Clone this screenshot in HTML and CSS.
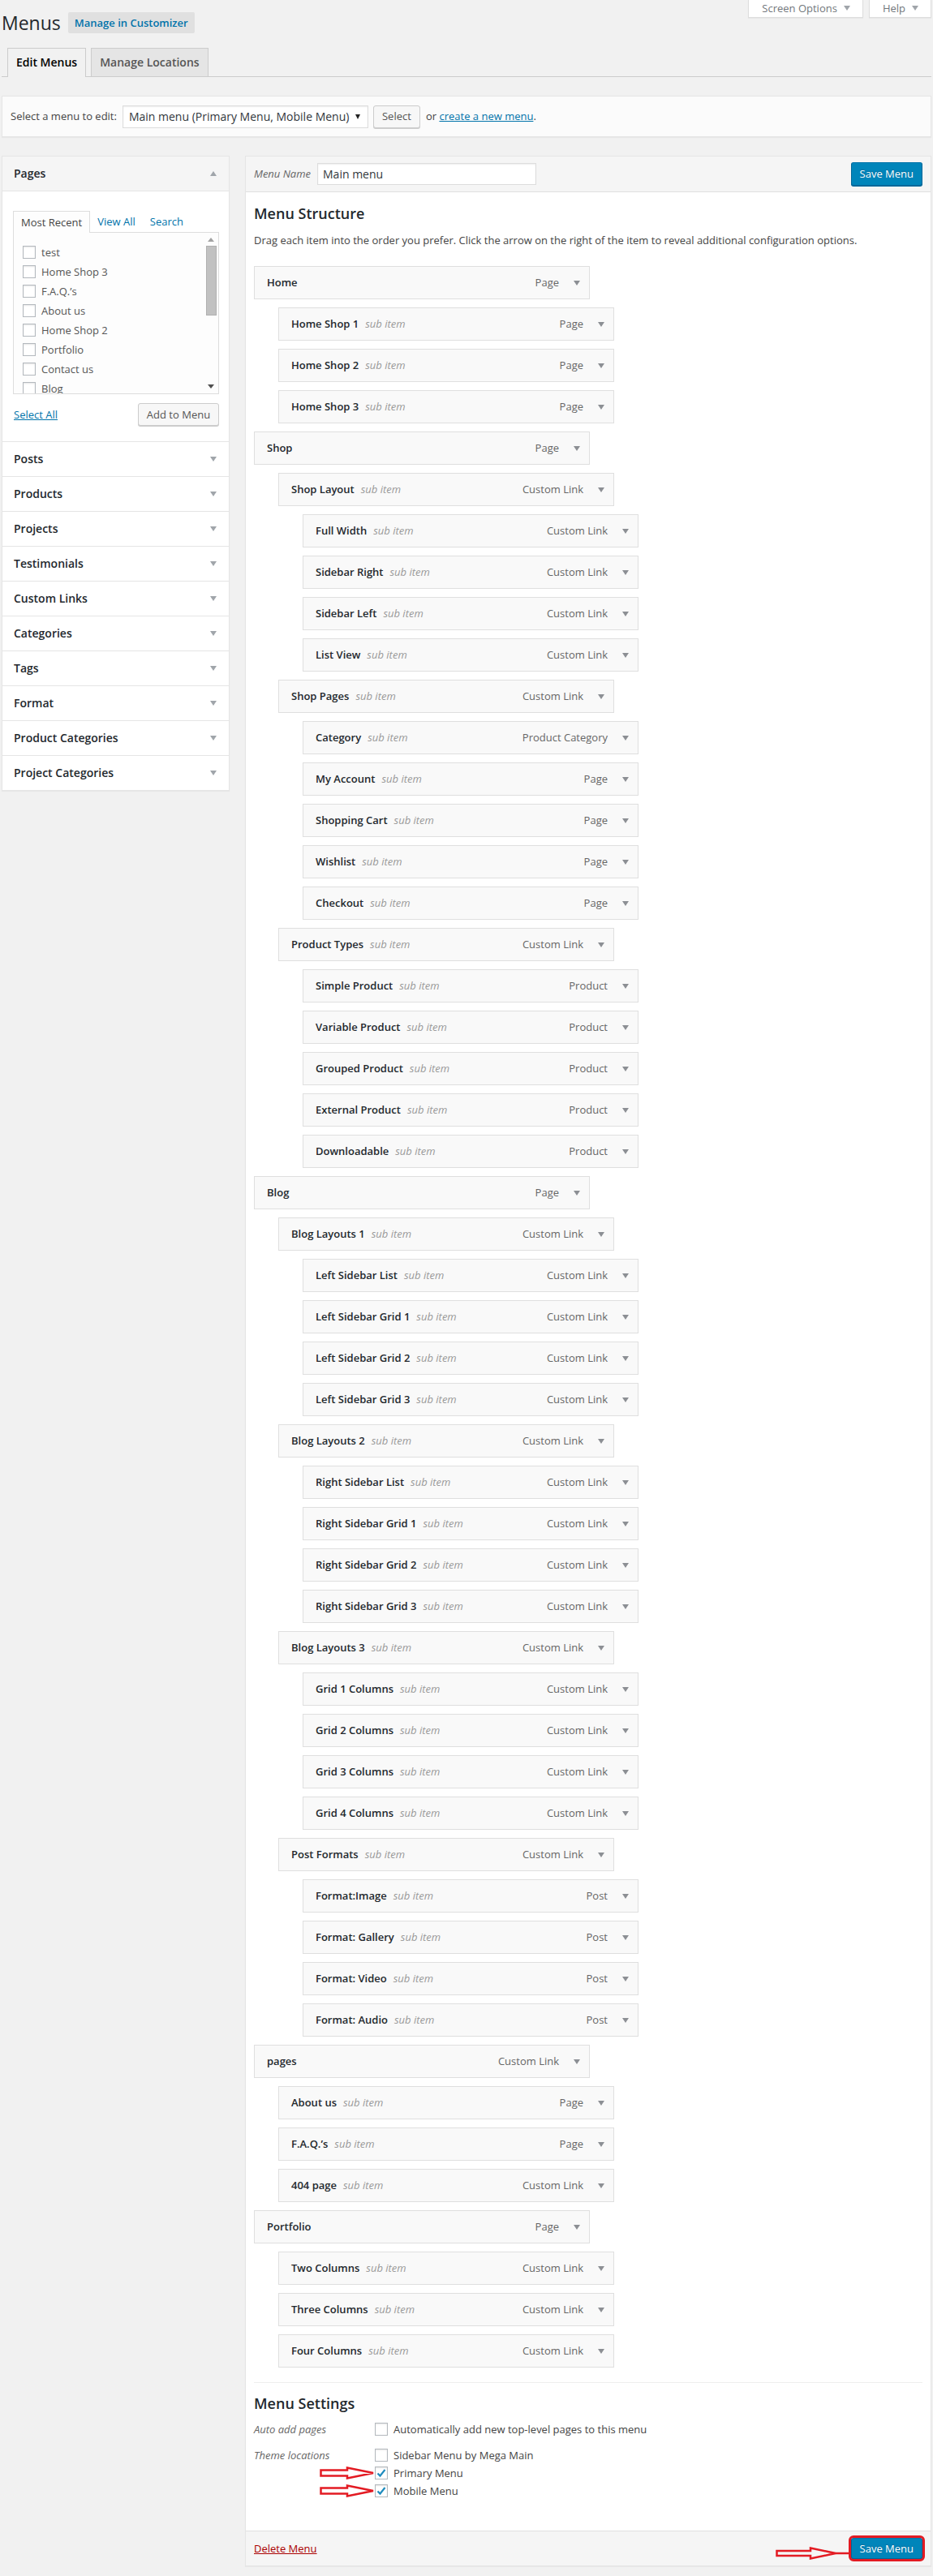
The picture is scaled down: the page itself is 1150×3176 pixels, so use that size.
FILE: index.html
```html
<!DOCTYPE html>
<html lang="en">

<head>
  <meta charset="UTF-8">
  <title>Menus</title>
  <link rel="stylesheet" href="styles.css">
</head>

<body>
  <div class="wrap">

    <!-- Title row -->
    <div class="page-top">
      <div class="page-title">
        <h1>Menus</h1>
        <a class="title-action" href="#">Manage in Customizer</a>
      </div>
      <div class="meta-links">
        <a class="meta-link" href="#">Screen Options <span class="caret light"></span></a>
        <a class="meta-link" href="#">Help <span class="caret light"></span></a>
      </div>
    </div>

    <div class="nav-tabs">
      <a class="nav-tab active" href="#">Edit Menus</a>
      <a class="nav-tab" href="#">Manage Locations</a>
    </div>

    <div class="manage-menus">
      <span>Select a menu to edit:</span>
      <div class="select-box">Main menu (Primary Menu, Mobile Menu) <span class="caret dark"></span></div>
      <button class="button">Select</button>
      <span class="or-new">or <a href="#">create a new menu</a>.</span>
    </div>

    <div class="columns">

      <!-- Left: items to add -->
      <div class="menu-meta">
        <div class="meta-section open">
          <h3 class="meta-title">Pages <span class="caret light up"></span></h3>
          <div class="meta-body">
            <div class="meta-tabs">
              <span class="meta-tab active">Most Recent</span>
              <a class="meta-tab" href="#">View All</a>
              <a class="meta-tab" href="#">Search</a>
            </div>
            <div class="meta-list">
              <ul class="checklist">
                <li><span class="checkbox"></span>test</li>
                <li><span class="checkbox"></span>Home Shop 3</li>
                <li><span class="checkbox"></span>F.A.Q.’s</li>
                <li><span class="checkbox"></span>About us</li>
                <li><span class="checkbox"></span>Home Shop 2</li>
                <li><span class="checkbox"></span>Portfolio</li>
                <li><span class="checkbox"></span>Contact us</li>
                <li><span class="checkbox"></span>Blog</li>
              </ul>
              <div class="scrollbar">
                <span class="caret scroll up"></span>
                <span class="thumb"></span>
                <span class="caret scroll"></span>
              </div>
            </div>
            <div class="meta-actions">
              <a href="#">Select All</a>
              <button class="button">Add to Menu</button>
            </div>
          </div>
        </div>
        <h3 class="meta-title">Posts <span class="caret light"></span></h3>
        <h3 class="meta-title">Products <span class="caret light"></span></h3>
        <h3 class="meta-title">Projects <span class="caret light"></span></h3>
        <h3 class="meta-title">Testimonials <span class="caret light"></span></h3>
        <h3 class="meta-title">Custom Links <span class="caret light"></span></h3>
        <h3 class="meta-title">Categories <span class="caret light"></span></h3>
        <h3 class="meta-title">Tags <span class="caret light"></span></h3>
        <h3 class="meta-title">Format <span class="caret light"></span></h3>
        <h3 class="meta-title">Product Categories <span class="caret light"></span></h3>
        <h3 class="meta-title">Project Categories <span class="caret light"></span></h3>
      </div>

      <!-- Right: menu editor -->
      <div class="menu-edit">
        <div class="menu-header">
          <label class="menu-name">Menu Name <span class="text-input">Main menu</span></label>
          <button class="button-primary">Save Menu</button>
        </div>

        <div class="menu-body">
          <h3>Menu Structure</h3>
          <p class="desc">Drag each item into the order you prefer. Click the arrow on the right of the item to reveal additional configuration options.</p>

          <ul class="menu">
            <li class="menu-item"><span class="item-title">Home</span><span class="item-type">Page</span><span class="caret"></span></li>
            <li class="menu-item depth-1"><span class="item-title">Home Shop 1<span class="sub">sub item</span></span><span class="item-type">Page</span><span class="caret"></span></li>
            <li class="menu-item depth-1"><span class="item-title">Home Shop 2<span class="sub">sub item</span></span><span class="item-type">Page</span><span class="caret"></span></li>
            <li class="menu-item depth-1"><span class="item-title">Home Shop 3<span class="sub">sub item</span></span><span class="item-type">Page</span><span class="caret"></span></li>
            <li class="menu-item"><span class="item-title">Shop</span><span class="item-type">Page</span><span class="caret"></span></li>
            <li class="menu-item depth-1"><span class="item-title">Shop Layout<span class="sub">sub item</span></span><span class="item-type">Custom Link</span><span class="caret"></span></li>
            <li class="menu-item depth-2"><span class="item-title">Full Width<span class="sub">sub item</span></span><span class="item-type">Custom Link</span><span class="caret"></span></li>
            <li class="menu-item depth-2"><span class="item-title">Sidebar Right<span class="sub">sub item</span></span><span class="item-type">Custom Link</span><span class="caret"></span></li>
            <li class="menu-item depth-2"><span class="item-title">Sidebar Left<span class="sub">sub item</span></span><span class="item-type">Custom Link</span><span class="caret"></span></li>
            <li class="menu-item depth-2"><span class="item-title">List View<span class="sub">sub item</span></span><span class="item-type">Custom Link</span><span class="caret"></span></li>
            <li class="menu-item depth-1"><span class="item-title">Shop Pages<span class="sub">sub item</span></span><span class="item-type">Custom Link</span><span class="caret"></span></li>
            <li class="menu-item depth-2"><span class="item-title">Category<span class="sub">sub item</span></span><span class="item-type">Product Category</span><span class="caret"></span></li>
            <li class="menu-item depth-2"><span class="item-title">My Account<span class="sub">sub item</span></span><span class="item-type">Page</span><span class="caret"></span></li>
            <li class="menu-item depth-2"><span class="item-title">Shopping Cart<span class="sub">sub item</span></span><span class="item-type">Page</span><span class="caret"></span></li>
            <li class="menu-item depth-2"><span class="item-title">Wishlist<span class="sub">sub item</span></span><span class="item-type">Page</span><span class="caret"></span></li>
            <li class="menu-item depth-2"><span class="item-title">Checkout<span class="sub">sub item</span></span><span class="item-type">Page</span><span class="caret"></span></li>
            <li class="menu-item depth-1"><span class="item-title">Product Types<span class="sub">sub item</span></span><span class="item-type">Custom Link</span><span class="caret"></span></li>
            <li class="menu-item depth-2"><span class="item-title">Simple Product<span class="sub">sub item</span></span><span class="item-type">Product</span><span class="caret"></span></li>
            <li class="menu-item depth-2"><span class="item-title">Variable Product<span class="sub">sub item</span></span><span class="item-type">Product</span><span class="caret"></span></li>
            <li class="menu-item depth-2"><span class="item-title">Grouped Product<span class="sub">sub item</span></span><span class="item-type">Product</span><span class="caret"></span></li>
            <li class="menu-item depth-2"><span class="item-title">External Product<span class="sub">sub item</span></span><span class="item-type">Product</span><span class="caret"></span></li>
            <li class="menu-item depth-2"><span class="item-title">Downloadable<span class="sub">sub item</span></span><span class="item-type">Product</span><span class="caret"></span></li>
            <li class="menu-item"><span class="item-title">Blog</span><span class="item-type">Page</span><span class="caret"></span></li>
            <li class="menu-item depth-1"><span class="item-title">Blog Layouts 1<span class="sub">sub item</span></span><span class="item-type">Custom Link</span><span class="caret"></span></li>
            <li class="menu-item depth-2"><span class="item-title">Left Sidebar List<span class="sub">sub item</span></span><span class="item-type">Custom Link</span><span class="caret"></span></li>
            <li class="menu-item depth-2"><span class="item-title">Left Sidebar Grid 1<span class="sub">sub item</span></span><span class="item-type">Custom Link</span><span class="caret"></span></li>
            <li class="menu-item depth-2"><span class="item-title">Left Sidebar Grid 2<span class="sub">sub item</span></span><span class="item-type">Custom Link</span><span class="caret"></span></li>
            <li class="menu-item depth-2"><span class="item-title">Left Sidebar Grid 3<span class="sub">sub item</span></span><span class="item-type">Custom Link</span><span class="caret"></span></li>
            <li class="menu-item depth-1"><span class="item-title">Blog Layouts 2<span class="sub">sub item</span></span><span class="item-type">Custom Link</span><span class="caret"></span></li>
            <li class="menu-item depth-2"><span class="item-title">Right Sidebar List<span class="sub">sub item</span></span><span class="item-type">Custom Link</span><span class="caret"></span></li>
            <li class="menu-item depth-2"><span class="item-title">Right Sidebar Grid 1<span class="sub">sub item</span></span><span class="item-type">Custom Link</span><span class="caret"></span></li>
            <li class="menu-item depth-2"><span class="item-title">Right Sidebar Grid 2<span class="sub">sub item</span></span><span class="item-type">Custom Link</span><span class="caret"></span></li>
            <li class="menu-item depth-2"><span class="item-title">Right Sidebar Grid 3<span class="sub">sub item</span></span><span class="item-type">Custom Link</span><span class="caret"></span></li>
            <li class="menu-item depth-1"><span class="item-title">Blog Layouts 3<span class="sub">sub item</span></span><span class="item-type">Custom Link</span><span class="caret"></span></li>
            <li class="menu-item depth-2"><span class="item-title">Grid 1 Columns<span class="sub">sub item</span></span><span class="item-type">Custom Link</span><span class="caret"></span></li>
            <li class="menu-item depth-2"><span class="item-title">Grid 2 Columns<span class="sub">sub item</span></span><span class="item-type">Custom Link</span><span class="caret"></span></li>
            <li class="menu-item depth-2"><span class="item-title">Grid 3 Columns<span class="sub">sub item</span></span><span class="item-type">Custom Link</span><span class="caret"></span></li>
            <li class="menu-item depth-2"><span class="item-title">Grid 4 Columns<span class="sub">sub item</span></span><span class="item-type">Custom Link</span><span class="caret"></span></li>
            <li class="menu-item depth-1"><span class="item-title">Post Formats<span class="sub">sub item</span></span><span class="item-type">Custom Link</span><span class="caret"></span></li>
            <li class="menu-item depth-2"><span class="item-title">Format:Image<span class="sub">sub item</span></span><span class="item-type">Post</span><span class="caret"></span></li>
            <li class="menu-item depth-2"><span class="item-title">Format: Gallery<span class="sub">sub item</span></span><span class="item-type">Post</span><span class="caret"></span></li>
            <li class="menu-item depth-2"><span class="item-title">Format: Video<span class="sub">sub item</span></span><span class="item-type">Post</span><span class="caret"></span></li>
            <li class="menu-item depth-2"><span class="item-title">Format: Audio<span class="sub">sub item</span></span><span class="item-type">Post</span><span class="caret"></span></li>
            <li class="menu-item"><span class="item-title">pages</span><span class="item-type">Custom Link</span><span class="caret"></span></li>
            <li class="menu-item depth-1"><span class="item-title">About us<span class="sub">sub item</span></span><span class="item-type">Page</span><span class="caret"></span></li>
            <li class="menu-item depth-1"><span class="item-title">F.A.Q.’s<span class="sub">sub item</span></span><span class="item-type">Page</span><span class="caret"></span></li>
            <li class="menu-item depth-1"><span class="item-title">404 page<span class="sub">sub item</span></span><span class="item-type">Custom Link</span><span class="caret"></span></li>
            <li class="menu-item"><span class="item-title">Portfolio</span><span class="item-type">Page</span><span class="caret"></span></li>
            <li class="menu-item depth-1"><span class="item-title">Two Columns<span class="sub">sub item</span></span><span class="item-type">Custom Link</span><span class="caret"></span></li>
            <li class="menu-item depth-1"><span class="item-title">Three Columns<span class="sub">sub item</span></span><span class="item-type">Custom Link</span><span class="caret"></span></li>
            <li class="menu-item depth-1"><span class="item-title">Four Columns<span class="sub">sub item</span></span><span class="item-type">Custom Link</span><span class="caret"></span></li>
          </ul>

          <div class="menu-settings">
            <h3>Menu Settings</h3>
            <div class="setting-row">
              <div class="setting-label">Auto add pages</div>
              <ul class="setting-opts">
                <li><span class="checkbox"></span>Automatically add new top-level pages to this menu</li>
              </ul>
            </div>
            <div class="setting-row">
              <div class="setting-label">Theme locations</div>
              <ul class="setting-opts">
                <li><span class="checkbox"></span>Sidebar Menu by Mega Main</li>
                <li>
                  <span class="checkbox checked">
                    <svg class="red-arrow" width="68" height="16" viewBox="0 0 68 16"><polygon points="1.5,4.5 34,4.5 34,1.5 66,8 34,14.5 34,11.5 1.5,11.5" /></svg>
                    <svg class="tick" width="14" height="14" viewBox="0 0 14 14"><path d="M2.5 7.5 L5.5 10.5 L11.5 3" /></svg>
                  </span>Primary Menu
                </li>
                <li>
                  <span class="checkbox checked">
                    <svg class="red-arrow" width="68" height="16" viewBox="0 0 68 16"><polygon points="1.5,4.5 34,4.5 34,1.5 66,8 34,14.5 34,11.5 1.5,11.5" /></svg>
                    <svg class="tick" width="14" height="14" viewBox="0 0 14 14"><path d="M2.5 7.5 L5.5 10.5 L11.5 3" /></svg>
                  </span>Mobile Menu
                </li>
              </ul>
            </div>
          </div>
        </div>

        <div class="menu-footer">
          <a class="delete" href="#">Delete Menu</a>
          <span class="save-marked">
            <svg class="red-arrow long" width="92" height="16" viewBox="0 0 92 16"><polygon points="1.5,5 43,5 43,1.5 74,8 43,14.5 43,11 1.5,11" /><line x1="74" y1="8" x2="92" y2="8" /></svg>
            <button class="button-primary">Save Menu</button>
          </span>
        </div>
      </div>

    </div>
  </div>
</body>

</html>
```

FILE: styles.css
```css
* {
  box-sizing: border-box;
}

body {
  margin: 0;
  background: #f1f1f1;
  font-family: "Open Sans", "Liberation Sans", sans-serif;
  font-size: 13px;
  line-height: 1.4;
  color: #444;
}

a {
  color: #0073aa;
}

ul {
  list-style: none;
  margin: 0;
  padding: 0;
}

.wrap {
  padding: 0 2px 1px 2px;
}

/* carets */
.caret {
  display: inline-block;
  width: 0;
  height: 0;
  border-left: 4px solid transparent;
  border-right: 4px solid transparent;
  border-top: 6px solid #8c8f94;
}

.caret.light {
  border-top-color: #a0a5aa;
}

.caret.dark {
  border-left-width: 3px;
  border-right-width: 3px;
  border-top: 6px solid #222;
}

.caret.up {
  border-top: none;
  border-bottom: 6px solid #a0a5aa;
}

/* title row */
.page-top {
  display: flex;
  justify-content: space-between;
  align-items: flex-start;
}

.page-title {
  display: flex;
  align-items: center;
  gap: 9px;
  margin-top: 15px;
}

.page-title h1 {
  margin: 0;
  font-size: 23px;
  font-weight: 400;
  line-height: 26px;
  color: #23282d;
}

.title-action {
  display: inline-block;
  height: 26px;
  line-height: 26px;
  padding: 0 8px;
  background: #e0e0e0;
  border-radius: 2px;
  color: #0073aa;
  font-weight: 600;
  text-decoration: none;
}

.meta-links {
  display: flex;
  gap: 7px;
}

.meta-link {
  display: flex;
  align-items: center;
  gap: 8px;
  height: 22px;
  padding: 0 15px 1px 16px;
  background: #fff;
  border: 1px solid #ddd;
  border-top: none;
  box-shadow: 0 1px 1px rgba(0, 0, 0, .04);
  color: #72777c;
  text-decoration: none;
}

/* tabs */
.nav-tabs {
  display: flex;
  gap: 6px;
  margin-top: 18px;
  padding-left: 7px;
  border-bottom: 1px solid #ccc;
}

.nav-tab {
  padding: 5px 10px;
  font-size: 14px;
  font-weight: 600;
  line-height: 24px;
  border: 1px solid #ccc;
  border-bottom: none;
  background: #e5e5e5;
  color: #555;
  text-decoration: none;
}

.nav-tab.active {
  background: #f1f1f1;
  color: #000;
  margin-bottom: -1px;
  padding-bottom: 6px;
}

/* select menu bar */
.manage-menus {
  display: flex;
  align-items: center;
  height: 51px;
  margin-top: 23px;
  padding: 0 10px;
  background: #fbfbfb;
  border: 1px solid #e5e5e5;
  box-shadow: 0 1px 1px rgba(0, 0, 0, .04);
}

.select-box {
  display: flex;
  align-items: center;
  justify-content: space-between;
  width: 303px;
  height: 28px;
  margin-left: 7px;
  padding: 0 9px 0 7px;
  background: #fff;
  border: 1px solid #ddd;
  box-shadow: inset 0 1px 2px rgba(0, 0, 0, .07);
  font-size: 14px;
  color: #32373c;
}

.button {
  height: 28px;
  padding: 0 10px 1px;
  background: #f7f7f7;
  border: 1px solid #ccc;
  border-radius: 3px;
  box-shadow: 0 1px 0 #ccc;
  font-family: inherit;
  font-size: 13px;
  color: #555;
  white-space: nowrap;
}

.manage-menus .button {
  margin-left: 6px;
  height: 28px;
  width: 58px;
}

.or-new {
  margin-left: 7px;
}

/* columns */
.columns {
  display: flex;
  align-items: flex-start;
  gap: 19px;
  margin-top: 23px;
}

/* left: meta boxes */
.menu-meta {
  width: 281px;
  flex: none;
  background: #fff;
  border: 1px solid #e5e5e5;
  box-shadow: 0 1px 1px rgba(0, 0, 0, .04);
}

.meta-title {
  display: flex;
  align-items: center;
  justify-content: space-between;
  height: 43px;
  margin: 0;
  padding: 0 15px 0 14px;
  border-top: 1px solid #e5e5e5;
  font-size: 14px;
  font-weight: 600;
  color: #23282d;
}

.meta-section.open .meta-title {
  border-top: none;
  background: #f5f5f5;
  border-bottom: 1px solid #e5e5e5;
}

.meta-body {
  padding: 24px 12px 19px 13px;
}

.meta-tabs {
  display: flex;
  height: 26px;
}

.meta-tab {
  padding: 0 9px;
  line-height: 26px;
  color: #0073aa;
  text-decoration: none;
}

.meta-tab.active {
  background: #fdfdfd;
  border: 1px solid #ddd;
  border-bottom: none;
  color: #444;
  margin-bottom: -1px;
  height: 27px;
}

.meta-list {
  display: flex;
  height: 200px;
  background: #fdfdfd;
  border: 1px solid #ddd;
  overflow: hidden;
}

.checklist {
  flex: 1;
  padding: 12px 0 0 11px;
}

.checklist li {
  display: flex;
  align-items: center;
  gap: 7px;
  height: 24px;
  color: #555;
}

.scrollbar {
  display: flex;
  flex-direction: column;
  align-items: center;
  width: 16px;
  margin-right: 1px;
  padding: 6px 0;
}

.caret.scroll {
  border-left-width: 4px;
  border-right-width: 4px;
  border-top: 5px solid #505050;
}

.caret.scroll.up {
  border-top: none;
  border-bottom: 5px solid #a3a3a3;
}

.thumb {
  width: 13px;
  height: 86px;
  margin: 5px 0 auto;
  background: #c1c1c1;
  border: 1px solid #b0b0b0;
}

.meta-actions {
  display: flex;
  align-items: center;
  justify-content: space-between;
  margin-top: 11px;
}

.meta-actions a {
  padding-left: 1px;
}

.meta-actions .button {
  width: 100px;
  padding: 0 6px 1px;
}

/* checkbox */
.checkbox {
  position: relative;
  display: inline-flex;
  align-items: center;
  justify-content: center;
  width: 16px;
  height: 16px;
  flex: none;
  background: #fff;
  border: 1px solid #b4b9be;
  box-shadow: inset 0 1px 2px rgba(0, 0, 0, .1);
}

.tick path {
  fill: none;
  stroke: #1e8cbe;
  stroke-width: 2.2;
}

.red-arrow {
  position: absolute;
  right: calc(100% + 1px);
  top: -1px;
}

.red-arrow polygon,
.red-arrow line {
  fill: none;
  stroke: #e31b23;
  stroke-width: 2.5;
}

/* right: menu editor */
.menu-edit {
  flex: 1;
  background: #fff;
  border: 1px solid #e5e5e5;
  box-shadow: 0 1px 1px rgba(0, 0, 0, .04);
}

.menu-header {
  display: flex;
  align-items: center;
  justify-content: space-between;
  height: 44px;
  padding: 0 10px;
  background: #f5f5f5;
  border-bottom: 1px solid #dfdfdf;
}

.menu-name {
  display: flex;
  align-items: center;
  gap: 8px;
  font-style: italic;
  color: #666;
}

.text-input {
  display: flex;
  align-items: center;
  width: 270px;
  height: 27px;
  padding: 0 6px;
  background: #fff;
  border: 1px solid #ddd;
  box-shadow: inset 0 1px 2px rgba(0, 0, 0, .07);
  font-style: normal;
  font-size: 14px;
  color: #32373c;
}

.button-primary {
  height: 29px;
  padding: 0 10px 1px;
  background: #0085ba;
  border: 1px solid #0073aa;
  border-color: #0073aa #006799 #006799;
  border-radius: 3px;
  box-shadow: 0 1px 0 #006799;
  text-shadow: 0 -1px 1px #006799;
  font-family: inherit;
  font-size: 13px;
  color: #fff;
}

.menu-body {
  padding: 0 10px;
}

.menu-body h3 {
  margin: 14px 0 10px;
  font-size: 18px;
  font-weight: 600;
  line-height: 25px;
  color: #23282d;
}

.desc {
  margin: 0;
  line-height: 20px;
}

.menu {
  margin-top: 22px;
}

.menu-item {
  display: flex;
  align-items: center;
  width: 414px;
  height: 41px;
  margin-bottom: 10px;
  padding: 0 11px 0 15px;
  background: #f9f9f9;
  border: 1px solid #dfdfdf;
}

.menu-item.depth-1 {
  margin-left: 30px;
}

.menu-item.depth-2 {
  margin-left: 60px;
}

.item-title {
  flex: 1;
  font-weight: 600;
  color: #23282d;
}

.item-title .sub {
  margin-left: 8px;
  font-weight: 400;
  font-style: italic;
  color: #999;
}

.item-type {
  color: #666;
}

.menu-item .caret {
  margin-left: 18px;
}

/* settings */
.menu-settings {
  margin-top: 18px;
  padding-bottom: 38px;
  border-top: 1px solid #eee;
}

.menu-settings h3 {
  margin: 13px 0 8px;
}

.setting-row {
  display: flex;
}

.setting-row + .setting-row {
  margin-top: 10px;
}

.setting-label {
  width: 149px;
  line-height: 22px;
  font-style: italic;
  color: #666;
}

.setting-opts li {
  display: flex;
  align-items: center;
  gap: 7px;
  height: 22px;
  color: #444;
}

/* footer */
.menu-footer {
  display: flex;
  align-items: center;
  justify-content: space-between;
  height: 43px;
  padding: 0 10px;
  background: #f5f5f5;
  border-top: 1px solid #dfdfdf;
}

.delete {
  color: #a00;
}

.save-marked {
  position: relative;
  display: flex;
}

.save-marked .button-primary {
  height: 26px;
  outline: 3px solid #e31b23;
}

.red-arrow.long {
  right: calc(100% + 1px);
  top: 11px;
}
```
